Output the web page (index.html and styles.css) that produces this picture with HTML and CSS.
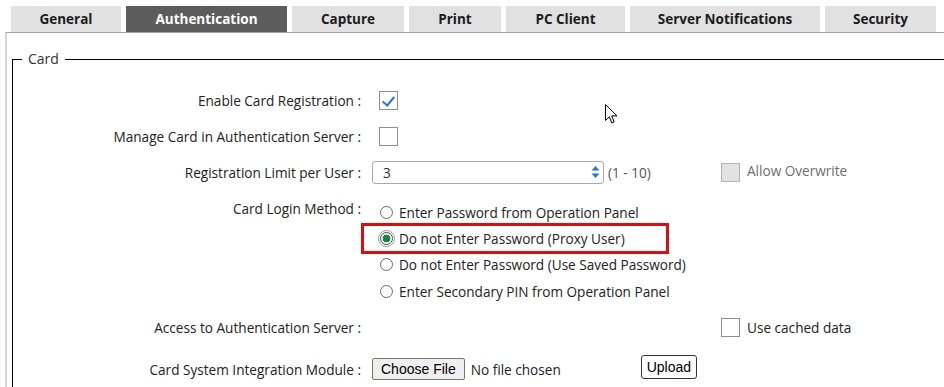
FILE: index.html
```html
<!DOCTYPE html>
<html lang="en">
<head>
    <meta charset="UTF-8">
    <meta name="viewport" content="width=device-width, initial-scale=1.0">
    <title>Authentication Settings</title>
    <link rel="stylesheet" href="styles.css">
</head>
<body>
    <div class="tabs">
        <div class="tab">General</div>
        <div class="tab active">Authentication</div>
        <div class="tab">Capture</div>
        <div class="tab">Print</div>
        <div class="tab">PC Client</div>
        <div class="tab">Server Notifications</div>
        <div class="tab">Security</div>
    </div>

    <div class="panel">
        <fieldset class="card">
            <legend>Card</legend>

            <div class="row">
                <label class="lbl">Enable Card Registration :</label>
                <div class="ctl"><span class="chk checked"></span></div>
            </div>

            <div class="row">
                <label class="lbl">Manage Card in Authentication Server :</label>
                <div class="ctl"><span class="chk"></span></div>
            </div>

            <div class="row">
                <label class="lbl">Registration Limit per User :</label>
                <div class="ctl">
                    <div class="spin">
                        <input type="text" value="3">
                        <svg class="spin-arrows" width="9" height="16" viewBox="0 0 9 16">
                            <path d="M0.5 6.5 L4.5 2 L8.5 6.5 Z" fill="#1f78d1"/>
                            <path d="M0.5 9.5 L4.5 14 L8.5 9.5 Z" fill="#1f78d1"/>
                        </svg>
                    </div>
                    <span class="hint">(1 - 10)</span>
                </div>
                <div class="extra">
                    <span class="chk disabled"></span>
                    <span class="muted">Allow Overwrite</span>
                </div>
            </div>

            <div class="row row-radios">
                <label class="lbl">Card Login Method :</label>
                <div class="radios">
                    <div class="opt"><span class="radio"></span>Enter Password from Operation Panel</div>
                    <div class="opt marked"><span class="radio on"></span>Do not Enter Password (Proxy User)</div>
                    <div class="opt"><span class="radio"></span>Do not Enter Password (Use Saved Password)</div>
                    <div class="opt"><span class="radio"></span>Enter Secondary PIN from Operation Panel</div>
                </div>
            </div>

            <div class="row">
                <label class="lbl">Access to Authentication Server :</label>
                <div class="ctl"></div>
                <div class="extra">
                    <span class="chk"></span>
                    <span>Use cached data</span>
                </div>
            </div>

            <div class="row row-last">
                <label class="lbl">Card System Integration Module :</label>
                <div class="ctl">
                    <button class="file-btn">Choose File</button>
                    <span class="file-name">No file chosen</span>
                    <button class="upload-btn">Upload</button>
                </div>
            </div>
        </fieldset>
    </div>

    <svg class="cursor" width="13" height="21" viewBox="0 0 13 21">
        <path d="M0.5 0.5 L0.5 16.5 L4.3 12.8 L6.8 19 L9.2 18 L6.7 11.9 L12 11.9 Z" fill="#fff" stroke="#000" stroke-width="1"/>
    </svg>
</body>
</html>
```

FILE: styles.css
```css
:root {
    --text: #222;
    --tab-bg: #e1e1e1;
    --tab-active: #5c5c5c;
    --blue: #1f78d1;
    --font: 'Open Sans', 'Noto Sans', sans-serif;
}
body {
    margin: 0;
    font-family: var(--font);
    font-size: 13.6px;
    color: var(--text);
    background: #fff;
    overflow: hidden;
    height: 387px;
    position: relative;
}
.tabs {
    display: grid;
    grid-template-columns: 110px 161px 112px 92px 119px 190px 111px;
    column-gap: 5px;
    padding: 6px 0 0 11px;
}
.tab {
    height: 26px;
    line-height: 26px;
    text-align: center;
    background: var(--tab-bg);
    font-weight: 700;
    font-size: 13.5px;
    color: #1c1c1c;
}
.tab.active {
    background: var(--tab-active);
    color: #fff;
}
.panel {
    margin-left: 5px;
    border-top: 1px solid #a3a3a3;
    border-left: 2px solid #d6d6d6;
    height: 360px;
}
.card {
    margin: 17px 0 0 5px;
    padding: 14px 0 0 0;
    border: 1px solid #000;
    border-right: none;
    min-width: 0;
}
.card legend {
    margin-left: 9px;
    padding: 0 6px;
    font-size: 14px;
    line-height: 18px;
    color: #333;
}
.row {
    display: grid;
    grid-template-columns: 348px 360px 1fr;
    align-items: center;
    height: 36px;
}
.lbl {
    text-align: right;
    white-space: nowrap;
}
.ctl {
    display: flex;
    align-items: center;
}
.extra {
    display: flex;
    align-items: center;
    gap: 7px;
}
.chk {
    display: inline-block;
    box-sizing: border-box;
    width: 19px;
    height: 19px;
    border: 1px solid #8f8f8f;
    background: #fff;
    position: relative;
}
.ctl .chk {
    margin-left: 18px;
}
.chk.checked::after {
    content: '';
    position: absolute;
    left: 5px;
    top: 2px;
    width: 5px;
    height: 10px;
    border-right: 2px solid var(--blue);
    border-bottom: 2px solid var(--blue);
    transform: rotate(40deg);
}
.chk.disabled {
    background: #e2e2e2;
    border-color: #b5b5b5;
}
.muted {
    color: #6e6e6e;
    margin-top: -3px;
}
.spin {
    display: flex;
    align-items: center;
    margin-left: 11px;
    width: 232px;
    height: 23px;
    box-sizing: border-box;
    border: 1px solid #a9a9a9;
    border-radius: 3px;
    background: #fff;
}
.spin input {
    flex: 1;
    border: none;
    outline: none;
    padding: 0 0 0 10px;
    font-family: var(--font);
    font-size: 13.6px;
    color: #3a2a1a;
    background: transparent;
    min-width: 0;
}
.spin-arrows {
    margin-right: 3px;
}
.hint {
    margin-left: 4px;
    color: #555;
}
.row-radios {
    height: auto;
    align-items: start;
    padding-top: 9px;
}
.row-radios .lbl {
    line-height: 19px;
}
.radios {
    display: flex;
    flex-direction: column;
}
.opt {
    display: flex;
    align-items: center;
    height: 26.3px;
    margin-left: 19px;
    position: relative;
    white-space: nowrap;
}
.radio {
    box-sizing: border-box;
    width: 13px;
    height: 13px;
    border: 1px solid #6a6a6a;
    border-radius: 50%;
    margin-right: 6px;
    background: #fff;
}
.radio.on {
    border-color: #4d4d4d;
    background: radial-gradient(circle, #18873d 0 3.6px, #fff 4.2px);
    outline: 1px solid #9a9a9a;
    outline-offset: 1px;
}
.opt.marked::after {
    content: '';
    position: absolute;
    left: -19px;
    top: -2px;
    width: 302px;
    height: 25px;
    border: 3px solid #e00b0b;
}
.row-radios + .row {
    margin-top: 5px;
}
.row-last {
    margin-top: 6px;
}
.file-btn {
    margin-left: 11px;
    height: 22px;
    padding: 0 8px;
    font-family: 'Liberation Sans', Arial, sans-serif;
    font-size: 14px;
    color: #000;
    background: #efefef;
    border: 1px solid #767676;
    border-radius: 2px;
}
.file-name {
    margin-left: 6px;
    width: 170px;
}
.upload-btn {
    margin-top: -5px;
    height: 24px;
    padding: 0 5px;
    font-family: 'Liberation Sans', Arial, sans-serif;
    font-size: 14px;
    color: #000;
    background: #fff;
    border: 1px solid #333;
    border-radius: 3px;
}
.cursor {
    position: absolute;
    left: 605px;
    top: 104px;
}
```
